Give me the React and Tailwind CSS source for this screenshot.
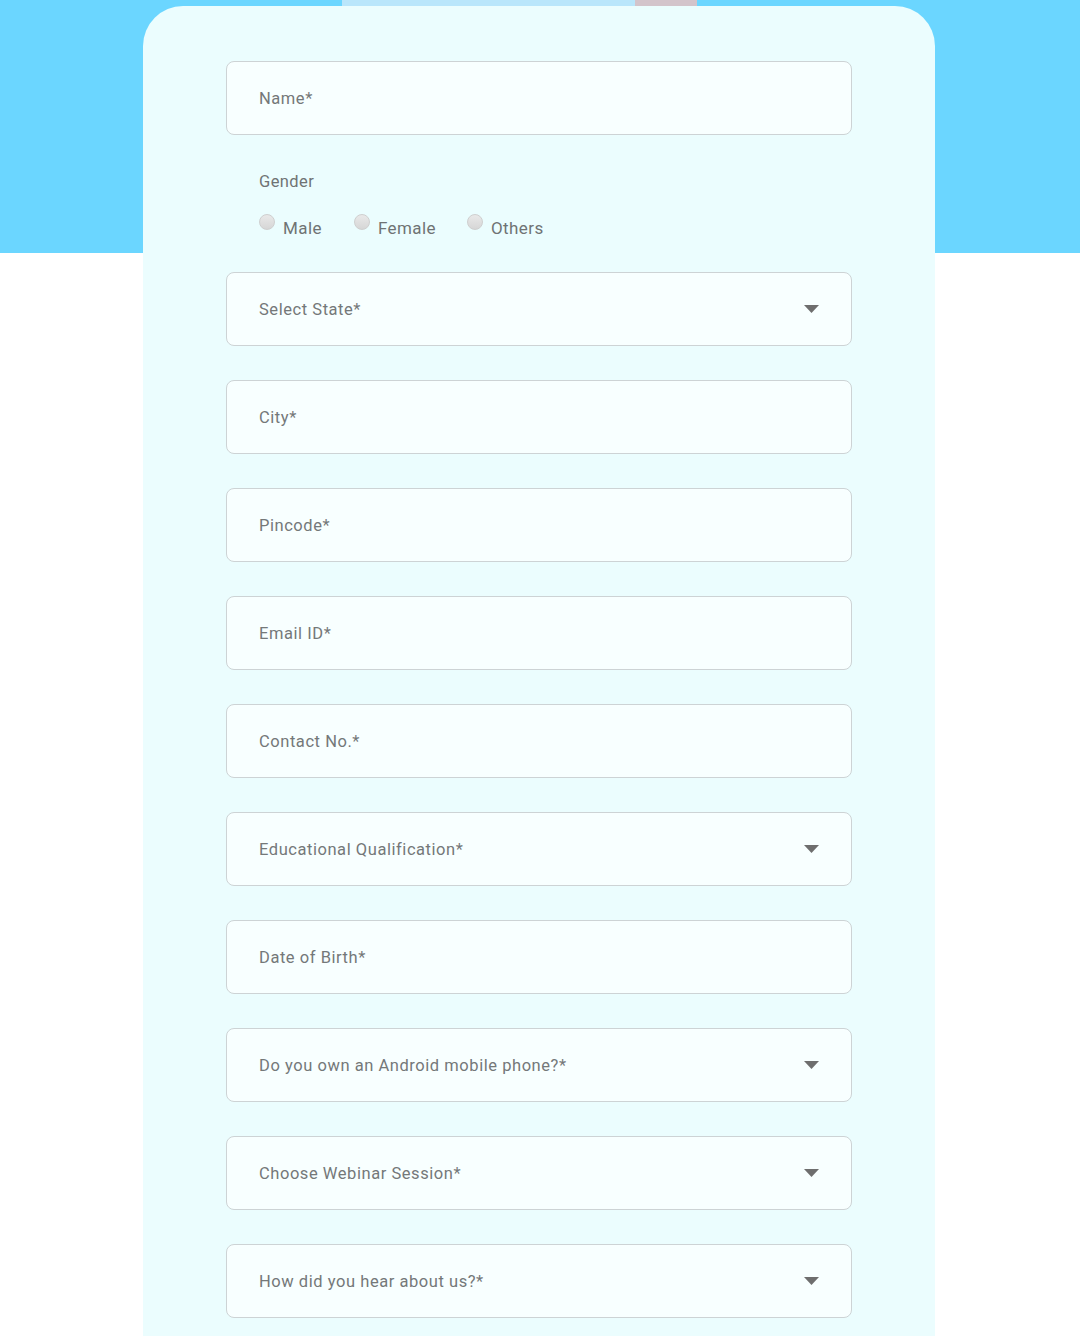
import React from 'react';

const fields = [
  { label: 'Select State*', select: true },
  { label: 'City*' },
  { label: 'Pincode*' },
  { label: 'Email ID*' },
  { label: 'Contact No.*' },
  { label: 'Educational Qualification*', select: true },
  { label: 'Date of Birth*' },
  { label: 'Do you own an Android mobile phone?*', select: true },
  { label: 'Choose Webinar Session*', select: true },
  { label: 'How did you hear about us?*', select: true },
];

const Field = ({ label, select }) => (
  <div className="flex h-[74px] items-center justify-between rounded-lg border border-[#cdd3d5] bg-[#f8ffff] pl-[32px] pr-[32px]">
    <span className="pt-[2px] text-[16.5px] tracking-[0.55px] text-[#747879]">{label}</span>
    {select && (
      <svg width="15" height="8" viewBox="0 0 15 8" className="text-[#6e6e6e]">
        <path d="M0 0H15L7.5 8Z" fill="currentColor" />
      </svg>
    )}
  </div>
);

const Radio = ({ label }) => (
  <label className="flex items-start gap-2">
    <span className="mt-[-1px] h-4 w-4 rounded-full border border-[#cfcfcf] bg-gradient-to-b from-[#e9e9e9] to-[#d6d6d6]" />
    <span className="mt-[1px] text-[17px] tracking-[0.4px] text-[#6f7374]">{label}</span>
  </label>
);

const Gender = () => (
  <div className="-mt-[1px] pl-[33px]">
    <div className="text-[16.5px] tracking-[0.4px] text-[#6f7374]">Gender</div>
    <div className="mt-[20px] flex">
      <div className="w-[95px]"><Radio label="Male" /></div>
      <div className="w-[113px]"><Radio label="Female" /></div>
      <Radio label="Others" />
    </div>
  </div>
);

export default function App() {
  return (
    <div className="min-h-[1336px] overflow-hidden bg-[linear-gradient(to_bottom,#6bd6ff_253px,#ffffff_253px)] font-['Roboto',sans-serif]">
      <div className="flex h-[6px] pl-[342px]">
        <div className="w-[293px] bg-[#b9e6fb]" />
        <div className="w-[62px] bg-[#d3c4cb]" />
      </div>
      <div className="ml-[143px] min-h-[1330px] w-[792px] rounded-t-[40px] bg-[#ebfdfe] px-[83px] pt-[55px]">
        <div className="flex flex-col">
          <Field label="Name*" />
          <div className="mt-[36px] mb-[31px]">
            <Gender />
          </div>
          <div className="flex flex-col gap-[34px]">
            {fields.map((f) => (
              <Field key={f.label} label={f.label} select={f.select} />
            ))}
          </div>
        </div>
      </div>
    </div>
  );
}
